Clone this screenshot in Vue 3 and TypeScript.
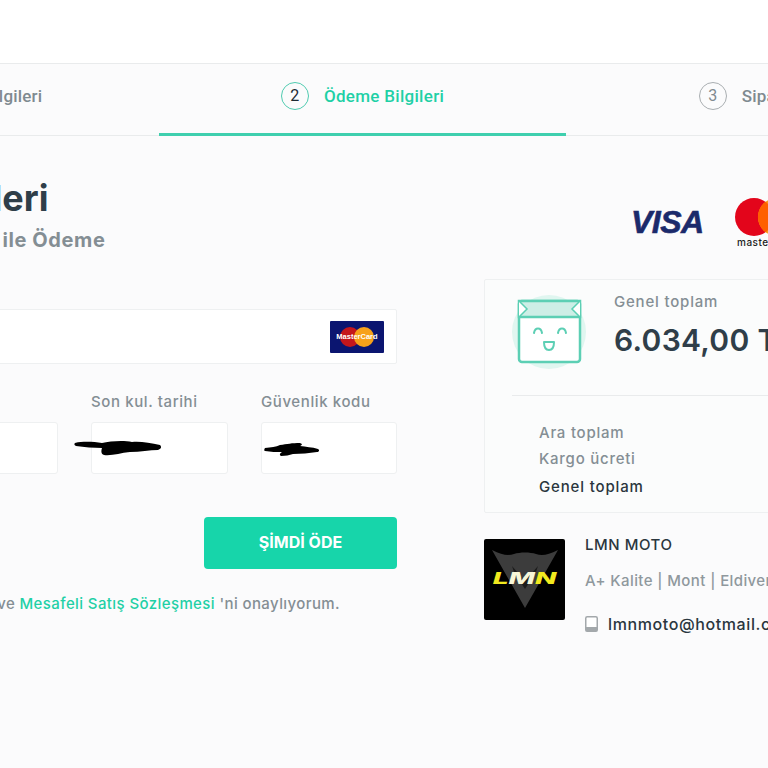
<template>
  <div class="screen">
    <div class="page">
      <header class="topbar"></header>

      <nav class="tabs">
        <div v-for="(tab, index) in tabs" :key="tab" class="tab" :class="{ active: index === 1 }">
          <span class="tab-num">{{ index + 1 }}</span>
          <span class="tab-label">{{ tab }}</span>
        </div>
      </nav>

      <main class="content">
        <section class="heading">
          <h1>Ödeme Bilgileri</h1>
          <h2>Kredi / Banka Kartı ile Ödeme</h2>
        </section>

        <section class="logos">
          <span class="visa">VISA</span>
          <div class="master">
            <svg width="44" height="38" viewBox="0 0 44 38">
              <circle cx="19" cy="19" r="19" fill="#e3051b" />
              <circle cx="42" cy="19" r="19" fill="#f79e1b" />
              <path d="M30.500 3.800a19 19 0 0 1 0 30.400a19 19 0 0 1 0-30.400z" fill="#ff5f00" />
            </svg>
            <span>mastercard</span>
          </div>
        </section>

        <form class="pay-form" @submit.prevent>
          <label class="field-label">Kart numarası</label>
          <div class="card-input">
            <div class="mini-card">
              <svg width="34" height="20" viewBox="0 0 34 20">
                <circle cx="10" cy="10" r="10" fill="#c4161c" />
                <circle cx="24" cy="10" r="10" fill="#f7a11a" />
              </svg>
              <span>MasterCard</span>
            </div>
          </div>

          <div class="field-row">
            <div class="field">
              <label class="field-label">Taksit</label>
              <div class="input"></div>
            </div>
            <div class="field">
              <label class="field-label">Son kul. tarihi</label>
              <div class="input">
                <svg class="scribble date" width="88" height="20" viewBox="0 0 88 20">
                  <path d="M1 4C10 2 20 3 28 4C36 2 50 1 58 3C66 2 76 4 86 6C88 8 87 10 84 11C76 11 66 13 56 13C46 14 38 17 30 16C27 15 27 12 28 9C20 9 10 8 2 7C0 6 0 5 1 4Z" fill="#000" />
                </svg>
              </div>
            </div>
            <div class="field">
              <label class="field-label">Güvenlik kodu</label>
              <div class="input">
                <svg class="scribble code" width="56" height="16" viewBox="0 0 56 16">
                  <path d="M1 7c6-1 11-1 15-3c7-1 12-2 20-2c3 1 2 2 0 3c6 1 12 1 18 3c2 1 1 3-1 3c-8 1-16 2-24 2c-4 1-7 2-12 2c-2-1-1-3 1-4c-6 0-11 0-17-1c-1 0-1-2 0-3z" fill="#000" />
                </svg>
              </div>
            </div>
          </div>

          <div class="actions">
            <button type="button" class="pay-btn">ŞİMDİ ÖDE</button>
          </div>

          <p class="terms">
            Ön Bilgilendirme Formu'nu ve <a>Mesafeli Satış Sözleşmesi</a> 'ni onaylıyorum.
          </p>
        </form>

        <aside class="side">
          <div class="summary">
            <div class="total">
              <svg class="bag" width="74" height="74" viewBox="0 0 74 74">
                <circle cx="37" cy="37" r="37" fill="#e0f6f0" />
                <rect x="7" y="6" width="61" height="61" rx="3" fill="#fff" stroke="#5ccfb4" stroke-width="2.500" />
                <path d="M7 6h61v16H7z" fill="#cdeee6" stroke="#5ccfb4" stroke-width="2.500" />
                <path d="M7 6l8 8l-8 8M68 6l-8 8l8 8" fill="#fff" stroke="#5ccfb4" stroke-width="1.500" />
                <path d="M22 38c1-6 7-6 8 0M46 38c1-6 7-6 8 0" fill="none" stroke="#5ccfb4" stroke-width="2" stroke-linecap="round" />
                <path d="M32 47h10c0 5-2 8-5 8s-5-3-5-8z" fill="#fff" stroke="#5ccfb4" stroke-width="2" stroke-linejoin="round" />
              </svg>
              <div class="total-text">
                <div class="total-label">Genel toplam</div>
                <div class="total-value">6.034,00 TL</div>
              </div>
            </div>
            <div class="rows">
              <div v-for="row in rows" :key="row" class="row">{{ row }}</div>
              <div class="row strong">Genel toplam</div>
            </div>
          </div>

          <div class="seller">
            <div class="seller-logo">
              <svg width="81" height="81" viewBox="0 0 81 81">
                <path d="M8 11C18 16 24 17 30 15C36 13 46 13 52 15C58 17 64 16 74 11L41 69Z" fill="#3c3c3c" />
                <path d="M28 27L41 42L54 27L52 33L41 50L30 33Z" fill="#1c1c1c" />
              </svg>
              <span><i class="yellow">L</i><i>M</i><i class="yellow">N</i></span>
            </div>
            <div class="seller-info">
              <div class="seller-name">LMN MOTO</div>
              <div class="seller-desc">A+ Kalite | Mont | Eldiven | Kask</div>
              <div class="seller-mail">
                <svg width="13" height="16" viewBox="0 0 13 16">
                  <rect x=".75" y=".75" width="11.500" height="14.500" rx="1.500" fill="#fff" stroke="#a3a8ab" stroke-width="1.500" />
                  <rect x=".75" y="11" width="11.500" height="4.250" fill="#a3a8ab" />
                </svg>
                <span>lmnmoto@hotmail.com</span>
              </div>
            </div>
          </div>
        </aside>
      </main>
    </div>
  </div>
</template>

<script setup lang="ts">
const tabs: string[] = ['Teslimat Bilgileri', 'Ödeme Bilgileri', 'Sipariş Özeti']
const rows: string[] = ['Ara toplam', 'Kargo ücreti']
</script>

<style>
html,
body {
  margin: 0;
  background: #fbfbfc;
}
</style>

<style scoped>
.screen {
  width: 768px;
  height: 768px;
  overflow: hidden;
  background: #fbfbfc;
  font-family: Inter, "Liberation Sans", sans-serif;
}

.page {
  width: 1221px;
  margin-left: -248px;
}

.topbar {
  height: 63px;
  background: #fff;
  border-bottom: 1px solid #e9ebec;
}

.tabs {
  display: grid;
  grid-template-columns: repeat(3, 407px);
  height: 71px;
  border-bottom: 1px solid #e9ebec;
}

.tab {
  position: relative;
  display: flex;
  align-items: center;
  justify-content: center;
  gap: 15px;
  padding-bottom: 8px;
  color: #7f8a90;
  font-family: Roboto, sans-serif;
  font-size: 17px;
  font-weight: 500;
  letter-spacing: 0.2px;
}

.tab-num {
  display: flex;
  align-items: center;
  justify-content: center;
  width: 26px;
  height: 26px;
  border: 1px solid #a9aeb1;
  border-radius: 50%;
  font-size: 16px;
  font-weight: 400;
}

.tab.active {
  color: #1fd0a6;
  letter-spacing: 0.3px;
}

.tab.active .tab-num {
  border-color: #4fcbb0;
  color: #1c2a33;
}

.tab.active::after {
  content: "";
  position: absolute;
  left: 0;
  right: 0;
  bottom: -1px;
  height: 3px;
  background: #3fcfae;
}

.content {
  display: grid;
  grid-template-columns: 615px 340px;
  grid-template-rows: 143px auto;
  column-gap: 87px;
  padding-left: 30px;
}

.heading {
  padding-top: 41px;
  white-space: nowrap;
}

h1 {
  margin: 0;
  font-size: 36px;
  line-height: 42px;
  font-weight: 700;
  color: #2f3e49;
}

h2 {
  margin: 10px 0 0 22px;
  font-size: 20px;
  line-height: 22px;
  font-weight: 700;
  color: #848e94;
  letter-spacing: 0.6px;
}

.logos {
  display: flex;
  align-items: flex-start;
  gap: 34px;
  padding: 62px 0 0 147px;
}

.visa {
  width: 70px;
  margin-top: 10px;
  font-family: "Liberation Sans", sans-serif;
  font-size: 32px;
  line-height: 28px;
  font-style: italic;
  font-weight: 700;
  color: #1b2a6b;
  letter-spacing: -0.5px;
  -webkit-text-stroke: 0.6px #1b2a6b;
}

.master {
  display: flex;
  flex-direction: column;
  width: 70px;
}

.master svg {
  display: block;
}

.master span {
  margin: 0 0 0 2px;
  font-size: 10px;
  line-height: 12px;
  font-weight: 500;
  color: #222;
  letter-spacing: 0.5px;
}

.field-label {
  display: block;
  height: 20px;
  margin-bottom: 10px;
  font-size: 15px;
  line-height: 20px;
  font-weight: 500;
  color: #848e94;
  letter-spacing: 0.6px;
  white-space: nowrap;
}

.card-input {
  display: flex;
  align-items: center;
  justify-content: flex-end;
  height: 55px;
  padding-right: 12px;
  box-sizing: border-box;
  background: #fff;
  border: 1px solid #eef0f1;
  border-radius: 2px;
}

.mini-card {
  position: relative;
  display: flex;
  align-items: center;
  justify-content: center;
  width: 54px;
  height: 32px;
  background: #0b1570;
  border-radius: 1px;
}

.mini-card span {
  position: absolute;
  inset: 0;
  display: flex;
  align-items: center;
  justify-content: center;
  font-family: "Liberation Sans", sans-serif;
  font-size: 7.5px;
  font-weight: 700;
  color: #fff;
}

.field-row {
  display: grid;
  grid-template-columns: 137px 137px 136px;
  justify-content: end;
  column-gap: 33px;
  margin-top: 28px;
}

.field .field-label {
  margin-bottom: 10px;
}

.input {
  position: relative;
  height: 52px;
  box-sizing: border-box;
  background: #fff;
  border: 1px solid #eef0f1;
  border-radius: 3px;
}

.scribble {
  position: absolute;
}

.scribble.date {
  left: -18px;
  top: 16px;
}

.scribble.code {
  left: 2px;
  top: 18px;
}

.actions {
  display: flex;
  justify-content: flex-end;
  margin-top: 43px;
}

.pay-btn {
  width: 193px;
  height: 52px;
  padding-bottom: 3px;
  border: none;
  border-radius: 4px;
  background: #17d5aa;
  color: #fff;
  font-family: inherit;
  font-size: 16px;
  font-weight: 700;
}

.terms {
  margin: 25px 0 0;
  padding-right: 57px;
  font-size: 15px;
  line-height: 20px;
  font-weight: 500;
  color: #848e94;
  text-align: right;
  white-space: nowrap;
  letter-spacing: 0.4px;
}

.terms a {
  color: #1fd0a6;
}

.summary {
  height: 234px;
  box-sizing: border-box;
  padding: 15px 0 0 27px;
  background: #fbfcfc;
  border: 1px solid #eef0f1;
  border-radius: 2px;
}

.total {
  display: flex;
  gap: 28px;
  height: 100px;
  border-bottom: 1px solid #e9ebec;
}

.total-label {
  font-size: 15px;
  line-height: 14px;
  font-weight: 500;
  color: #848e94;
  letter-spacing: 0.8px;
}

.total-value {
  margin-top: 11px;
  font-size: 30px;
  line-height: 40px;
  font-weight: 600;
  color: #2f3e49;
  letter-spacing: 0.3px;
  white-space: nowrap;
}

.rows {
  padding: 23px 0 0 27px;
}

.row {
  font-size: 15px;
  line-height: 27px;
  font-weight: 500;
  color: #848e94;
  letter-spacing: 0.75px;
}

.row:nth-child(2) {
  margin-top: -1px;
  margin-bottom: 1px;
}

.row.strong {
  color: #2a363e;
  letter-spacing: 0.85px;
}

.seller {
  display: flex;
  gap: 20px;
  margin-top: 26px;
}

.seller-logo {
  position: relative;
  flex: none;
  width: 81px;
  height: 81px;
  background: #000;
  border-radius: 2px;
}

.seller-logo svg {
  display: block;
}

.seller-logo span {
  position: absolute;
  left: 0;
  right: 0;
  top: 29px;
  text-align: center;
  font-size: 16px;
  line-height: 20px;
  font-weight: 800;
  color: #f7f6d8;
  transform: scaleX(1.75);
}

.yellow {
  color: #f1e91f;
}

.seller-info {
  margin-top: -4px;
  white-space: nowrap;
}

.seller-name {
  font-size: 15px;
  line-height: 20px;
  font-weight: 500;
  color: #2a363e;
  letter-spacing: 0.55px;
}

.seller-desc {
  margin-top: 16px;
  font-size: 15px;
  line-height: 20px;
  font-weight: 500;
  color: #8f989d;
  letter-spacing: 0.4px;
}

.seller-mail {
  display: flex;
  align-items: center;
  gap: 10px;
  margin-top: 23px;
  font-size: 16px;
  line-height: 20px;
  font-weight: 500;
  color: #2a363e;
  letter-spacing: 0.6px;
}
</style>
